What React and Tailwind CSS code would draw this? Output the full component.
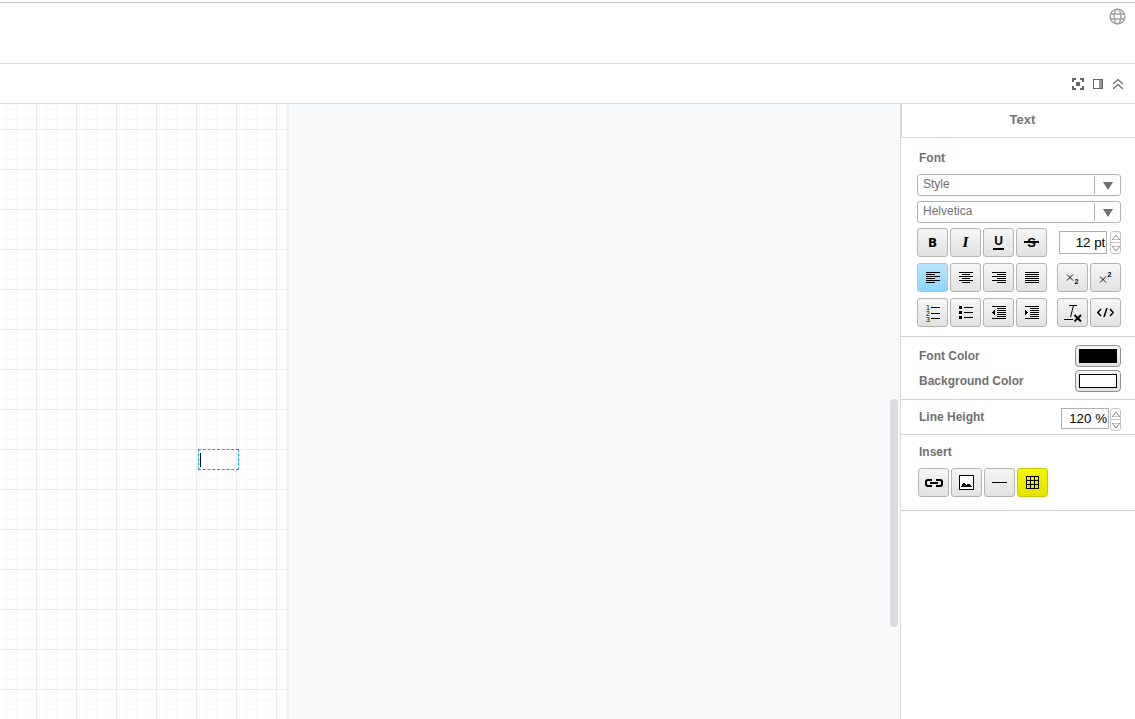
const Btn = ({ w = 'w-[31px]', tone = 'plain', children }) => {
  const tones = {
    plain: 'border-[#b4b4b4] bg-gradient-to-b from-[#f6f6f6] to-[#e2e2e2]',
    blue: 'border-[#a8c8dc] bg-gradient-to-b from-[#bce6fe] to-[#8ad4fd]',
    yellow: 'border-[#c8c800] bg-gradient-to-b from-[#f6f600] to-[#e4e400]',
  };
  return (
    <div className={`${w} h-full shrink-0 flex items-center justify-center rounded-[3px] border ${tones[tone]}`}>
      {children}
    </div>
  );
};

const Ico = ({ children, w = 18, h = 18 }) => (
  <svg width={w} height={h} viewBox={`0 0 ${w} ${h}`} fill="none" stroke="#000" strokeWidth="1" shapeRendering="crispEdges">
    {children}
  </svg>
);

const lines = (rows) => rows.map(([x1, x2, y], i) => <path key={i} d={`M${x1} ${y + 0.5}H${x2}`} />);

const AlignIcon = ({ rows }) => <Ico w={14} h={12}>{lines(rows)}</Ico>;

const Spinner = () => (
  <div className="w-[11px] h-[23px] ml-px flex flex-col border border-[#c4c4c4] rounded-[3px] bg-white">
    <div className="flex-1 flex items-center justify-center border-b border-[#c4c4c4]">
      <svg width="8" height="5" viewBox="0 0 8 5"><path d="M0 5L4 0L8 5Z" fill="#fff" stroke="#8a8a8a" /></svg>
    </div>
    <div className="flex-1 flex items-center justify-center">
      <svg width="8" height="5" viewBox="0 0 8 5"><path d="M0 0L4 5L8 0Z" fill="#fff" stroke="#8a8a8a" /></svg>
    </div>
  </div>
);

const Select = ({ label }) => (
  <div className="h-[22px] flex items-stretch border border-[#b4b4b4] rounded-[3px] bg-white text-[12px] text-[#707070]">
    <div className="flex-1 pl-[5px] leading-[18px]">{label}</div>
    <div className="w-[26px] my-[1px] border-l border-[#b4b4b4] flex items-center justify-center">
      <svg width="10" height="9" viewBox="0 0 10 9"><path d="M0 1H10L5 9Z" fill="#707070" /></svg>
    </div>
  </div>
);

const Label = ({ children }) => (
  <div className="text-[12px] leading-[14px] font-bold text-[#707070]">{children}</div>
);

const Swatch = ({ color }) => (
  <div className="w-[46px] h-[22px] p-[3px] rounded-[4px] border border-[#909090] bg-gradient-to-b from-[#f6f6f6] to-[#e2e2e2]">
    <div className="w-full h-full border border-black" style={{ backgroundColor: color }} />
  </div>
);

const ScriptX = ({ sup }) => (
  <svg width="14" height="14" viewBox="0 0 14 14" fill="none" stroke="#000">
    <path d={sup ? 'M1 5.5L7 11.5M7 5.5L1 11.5' : 'M1 3.5L7 9.5M7 3.5L1 9.5'} strokeWidth="0.9" />
    <text x="8.5" y={sup ? 6 : 13} fontSize="7" fontWeight="bold" fill="#000" stroke="none" fontFamily="Liberation Sans">2</text>
  </svg>
);

export default function App() {
  return (
    <div className="w-[1135px] h-[719px] overflow-hidden flex flex-col bg-white font-['Liberation_Sans',Arial,sans-serif]">
      <header className="h-[64px] shrink-0 pt-[2px] border-b border-[#dadce0]">
        <div className="h-full border-t border-[#c0c0c0] flex justify-end pt-[5px] pr-[9px]">
          <svg width="17" height="17" viewBox="0 0 17 17" fill="none" stroke="#a0a0a0" strokeWidth="1.4">
            <circle cx="8.5" cy="8.5" r="7.4" />
            <ellipse cx="8.5" cy="8.5" rx="3.4" ry="7.4" />
            <path d="M1.5 6H15.5M1.5 11H15.5" />
          </svg>
        </div>
      </header>

      <div className="h-[40px] shrink-0 border-b border-[#dadce0] flex items-center justify-end">
        <svg className="mr-[9px]" width="12" height="12" viewBox="0 0 12 12" fill="none" stroke="#666" strokeWidth="2" shapeRendering="crispEdges">
          <path d="M1 4V1H4M8 1H11V4M11 8V11H8M4 11H1V8" />
          <rect x="4" y="4" width="4" height="4" fill="#666" stroke="none" />
        </svg>
        <svg className="mr-[10px]" width="10" height="10" viewBox="0 0 10 10" shapeRendering="crispEdges">
          <rect x="0.5" y="0.5" width="9" height="9" fill="#fff" stroke="#666" />
          <rect x="6" y="1" width="3" height="8" fill="#9a9a9a" />
        </svg>
        <svg className="mr-[12px]" width="10" height="12" viewBox="0 0 10 12" fill="none" stroke="#666" strokeWidth="1.1">
          <path d="M0 6L5 1.5L10 6M0 11L5 6.5L10 11" />
        </svg>
      </div>

      <div className="flex-1 min-h-0 flex">
        <div className="w-[289px] shrink-0 relative border-r-2 border-[#eff0f2] bg-white bg-[linear-gradient(to_right,#ebebeb_1px,transparent_1px),linear-gradient(to_bottom,#ebebeb_1px,transparent_1px),linear-gradient(to_right,#f8f8f8_1px,transparent_1px),linear-gradient(to_bottom,#f8f8f8_1px,transparent_1px)] bg-[length:40px_40px,40px_40px,10px_10px,10px_10px] bg-[position:36px_25px,36px_25px,6px_5px,6px_5px]">
          <div className="absolute left-[198px] top-[345px] w-[41px] h-[21px] border border-dashed border-[#00a8ff]">
            <div className="ml-[1px] mt-[3px] w-px h-[14px] bg-black" />
          </div>
        </div>

        <div className="flex-1 relative bg-[#f8f9fa] border-r border-[#dadce0]">
          <div className="absolute right-[2px] top-[295px] w-[8px] h-[228px] rounded-[4px] bg-[#dadce0]" />
        </div>

        <aside className="w-[234px] shrink-0 bg-white text-black">
          <div className="h-[34px] pl-[8px] pb-[2px] border-l border-b border-[#dadce0] flex items-center justify-center text-[13px] font-bold text-[#757575]">
            Text
          </div>

          <section className="h-[199px] pt-[13px] pl-[16px] pr-[14px] border-b border-[#d0d0d0]">
            <div className="pl-[2px] mb-[9px]"><Label>Font</Label></div>
            <div className="flex flex-col gap-[5px]">
              <Select label="Style" />
              <Select label="Helvetica" />
            </div>

            <div className="mt-[5px] h-[29px] flex items-center gap-[2px]">
              <Btn><span className="text-[12px] font-['DejaVu_Sans',sans-serif] font-bold">B</span></Btn>
              <Btn><span className="text-[12px] font-['DejaVu_Serif',serif] font-bold italic">I</span></Btn>
              <Btn><span className="text-[12px] leading-[13px] font-bold border-b-2 border-black px-[1px]">U</span></Btn>
              <Btn>
                <span className="relative text-[13px] font-bold px-[3px]">
                  S
                  <span className="absolute left-0 right-0 top-[8px] h-[2px] bg-black" />
                </span>
              </Btn>
              <div className="ml-[10px] w-[50px] h-[23px] border border-[#b0b0b0] text-right pr-[1px] text-[13.33px] leading-[21px]">12 pt</div>
              <Spinner />
            </div>

            <div className="mt-[6px] h-[29px] flex gap-[2px]">
              <Btn tone="blue"><AlignIcon rows={[[0,14,0],[0,9,2],[0,14,4],[0,9,6],[0,14,8],[0,9,10]]} /></Btn>
              <Btn><AlignIcon rows={[[0,14,0],[3,11,2],[0,14,4],[3,11,6],[0,14,8],[3,11,10]]} /></Btn>
              <Btn><AlignIcon rows={[[0,14,0],[5,14,2],[0,14,4],[5,14,6],[0,14,8],[5,14,10]]} /></Btn>
              <Btn><AlignIcon rows={[[0,14,0],[0,14,2],[0,14,4],[0,14,6],[0,14,8],[0,14,10]]} /></Btn>
              <div className="w-[6px] shrink-0" />
              <Btn><ScriptX /></Btn>
              <Btn><ScriptX sup /></Btn>
            </div>

            <div className="mt-[6px] h-[29px] flex gap-[2px]">
              <Btn>
                <svg width="14" height="18" viewBox="0 0 14 18" fill="none" stroke="#000">
                  <path d="M5 3.5H14M5 9.5H14M5 14.5H14" shapeRendering="crispEdges" />
                  <text x="0" y="6" fontSize="7" fill="#000" stroke="none" fontFamily="Liberation Sans">1</text>
                  <text x="0" y="12" fontSize="7" fill="#000" stroke="none" fontFamily="Liberation Sans">2</text>
                  <text x="0" y="18" fontSize="7" fill="#000" stroke="none" fontFamily="Liberation Sans">3</text>
                </svg>
              </Btn>
              <Btn>
                <svg width="14" height="14" viewBox="0 0 14 14" fill="none" stroke="#000" shapeRendering="crispEdges">
                  <path d="M5 1.5H14M5 6.5H14M5 11.5H14" />
                  <path d="M0 0h3v3H0zM0 5h3v3H0zM0 10h3v3H0z" fill="#000" stroke="none" />
                </svg>
              </Btn>
              <Btn>
                <svg width="14" height="13" viewBox="0 0 14 13" fill="none" stroke="#000" shapeRendering="crispEdges">
                  <path d="M0 .5H14M5 2.5H14M5 4.5H14M5 6.5H14M5 8.5H14M5 10.5H14M0 12.5H14" />
                  <path d="M3 4V9L0 6.5Z" fill="#000" stroke="none" />
                </svg>
              </Btn>
              <Btn>
                <svg width="14" height="13" viewBox="0 0 14 13" fill="none" stroke="#000" shapeRendering="crispEdges">
                  <path d="M0 .5H14M5 2.5H14M5 4.5H14M5 6.5H14M5 8.5H14M5 10.5H14M0 12.5H14" />
                  <path d="M0 4V9L3 6.5Z" fill="#000" stroke="none" />
                </svg>
              </Btn>
              <div className="w-[6px] shrink-0" />
              <Btn>
                <svg width="18" height="18" viewBox="0 0 18 18" fill="none" stroke="#000">
                  <path d="M5 1.5H13M9.5 1.5L6.5 13" />
                  <path d="M0 15.5H9" shapeRendering="crispEdges" />
                  <path d="M10.5 11L17 17.5M17 11L10.5 17.5" strokeWidth="2" />
                </svg>
              </Btn>
              <Btn>
                <svg width="17" height="9" viewBox="0 0 17 9" fill="none" stroke="#000" strokeWidth="1.5">
                  <path d="M4 1L.8 4.5L4 8M13 1L16.2 4.5L13 8M10 0L7 9" />
                </svg>
              </Btn>
            </div>
          </section>

          <section className="h-[63px] pt-[8px] pl-[18px] pr-[14px] border-b border-[#d0d0d0] flex flex-col gap-[3px]">
            <div className="flex items-center justify-between">
              <Label>Font Color</Label>
              <Swatch color="#000000" />
            </div>
            <div className="flex items-center justify-between">
              <Label>Background Color</Label>
              <Swatch color="#ffffff" />
            </div>
          </section>

          <section className="h-[35px] pt-[8px] pl-[18px] pr-[14px] border-b border-[#d0d0d0] flex items-start justify-between">
            <div className="mt-[2px]"><Label>Line Height</Label></div>
            <div className="flex">
              <div className="w-[48px] h-[21px] border border-[#b0b0b0] text-right pr-[1px] text-[13.33px] leading-[20px]">120 %</div>
              <Spinner />
            </div>
          </section>

          <section className="h-[76px] pt-[10px] pl-[17px] border-b border-[#d0d0d0]">
            <div className="pl-[1px] mb-[9px]"><Label>Insert</Label></div>
            <div className="h-[29px] flex gap-[2px]">
              <Btn>
                <svg width="18" height="8" viewBox="0 0 18 8" fill="none" stroke="#000" strokeWidth="2">
                  <path d="M7 1H3Q1 1 1 3V5Q1 7 3 7H7M11 1H15Q17 1 17 3V5Q17 7 15 7H11M5 4H13" />
                </svg>
              </Btn>
              <Btn>
                <svg width="15" height="15" viewBox="0 0 15 15" shapeRendering="crispEdges">
                  <rect x="0.5" y="0.5" width="14" height="14" fill="#fff" stroke="#000" />
                  <path d="M2 12L5 7L7.5 10L9.5 8.5L13 12Z" fill="#000" />
                </svg>
              </Btn>
              <Btn><div className="w-[15px] h-px bg-black" /></Btn>
              <Btn tone="yellow">
                <svg width="13" height="13" viewBox="0 0 13 13" fill="none" stroke="#000" shapeRendering="crispEdges">
                  <path d="M.5 .5H12.5V12.5H.5ZM4.5 .5V12.5M8.5 .5V12.5M.5 4.5H12.5M.5 8.5H12.5" />
                </svg>
              </Btn>
            </div>
          </section>
        </aside>
      </div>
    </div>
  );
}
